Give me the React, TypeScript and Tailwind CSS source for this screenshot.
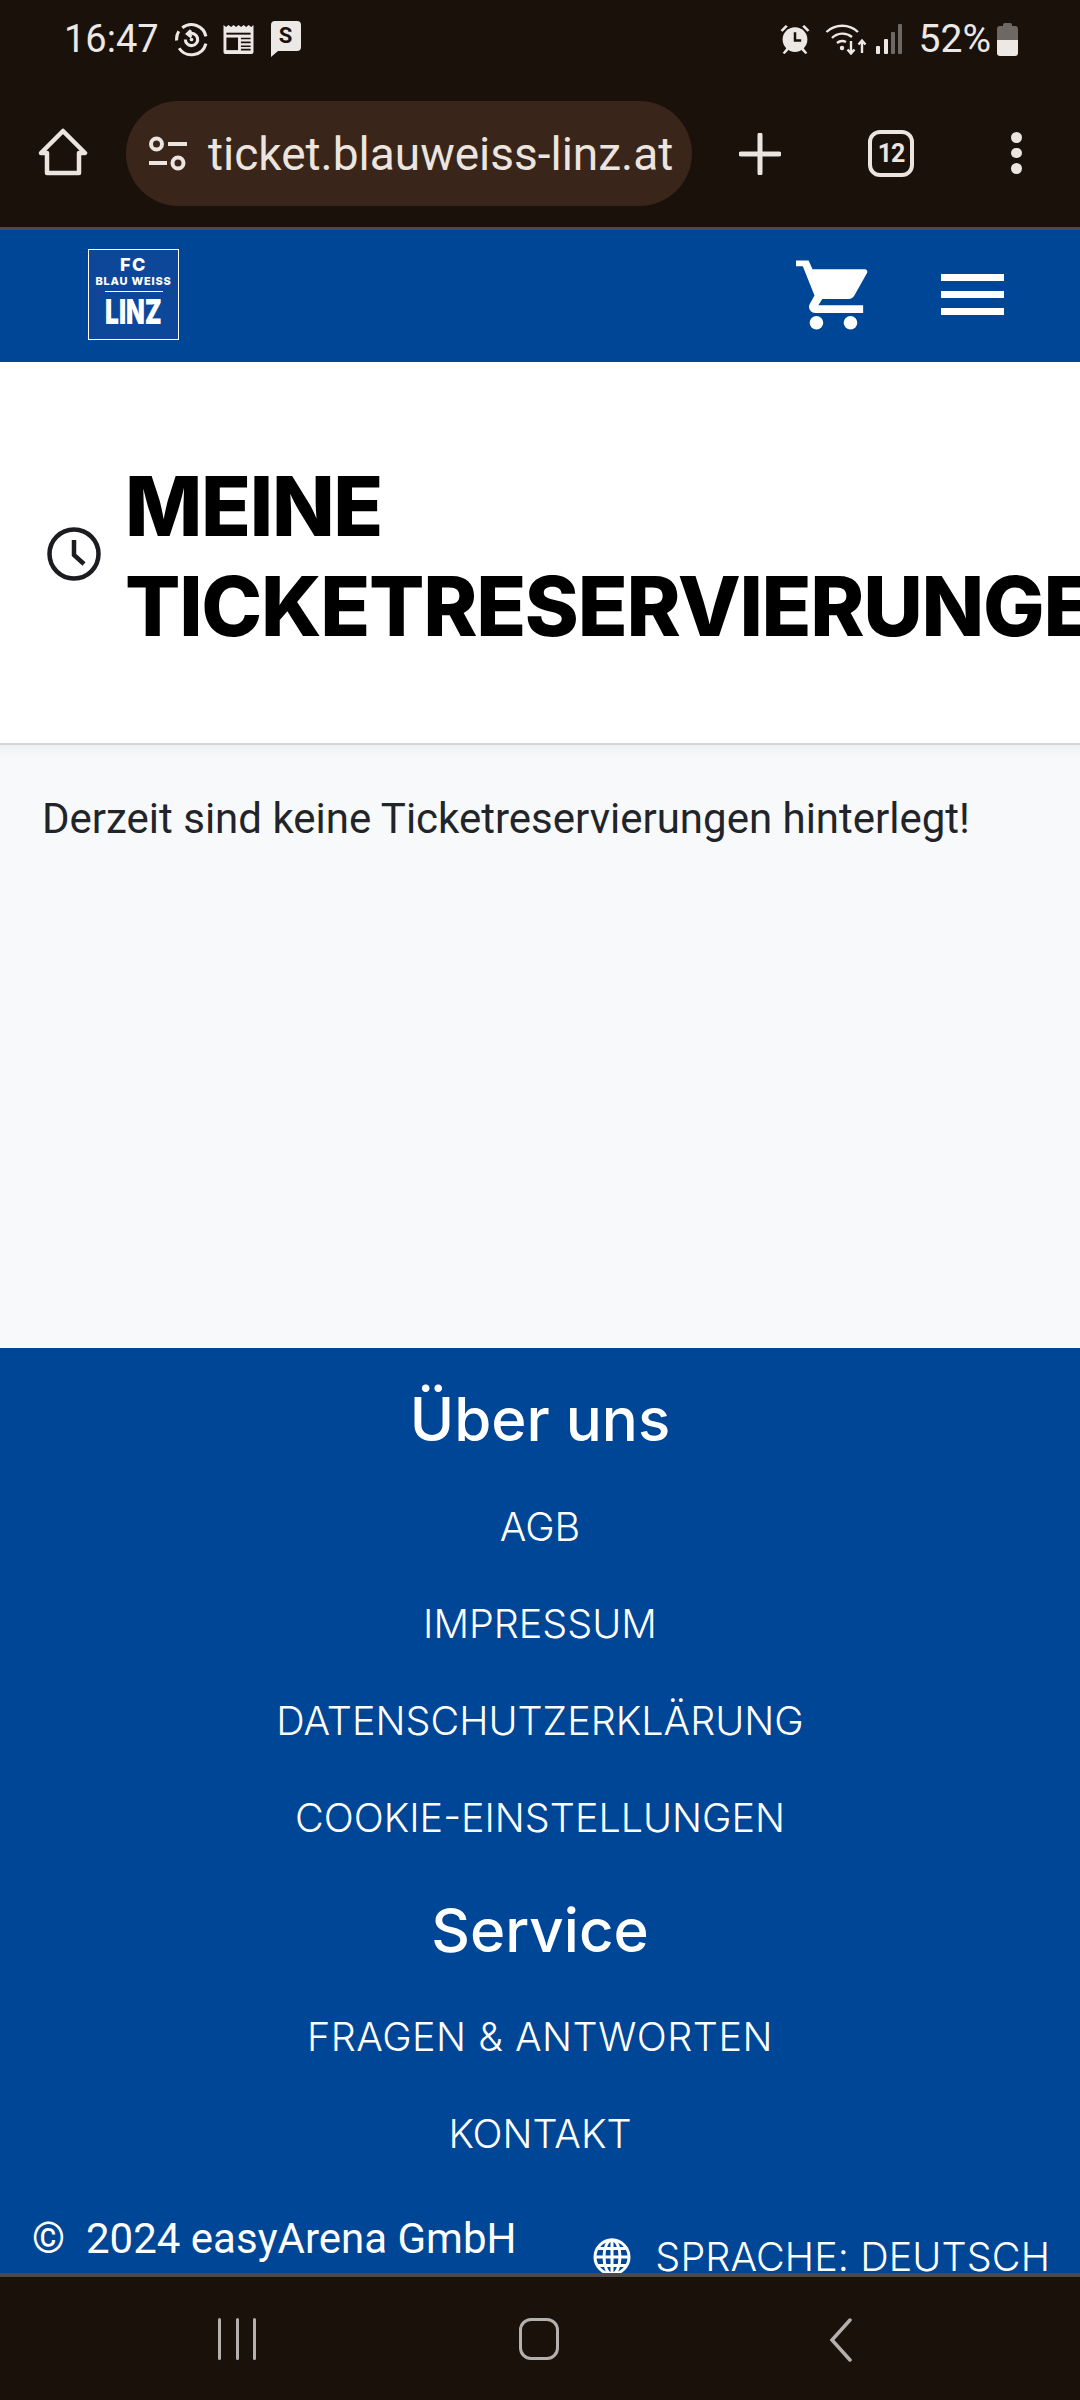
import React from "react";

const sans = "font-['Roboto',sans-serif]";
const display = "font-['Inter',sans-serif]";

function StatusIcons() {
  return (
    <div className="flex items-center">
      <svg width="35" height="35" viewBox="0 0 34 34" fill="none" stroke="#ece8e5" strokeWidth="3" className="ml-[15px]">
        <path d="M8 5.500A14.500 14.500 0 0 1 31 14M31 21A14.500 14.500 0 0 1 5 25.500M2.600 18a14.500 14.500 0 0 1 2-9" />
        <path d="M11 17a6 6 0 1 0 3.500-5.500" />
        <path d="M16.500 8l-3.500 3.500 4 3" />
        <circle cx="17" cy="17" r="1.800" fill="#ece8e5" stroke="none" />
      </svg>
      <svg width="33" height="30" viewBox="0 0 33 31" className="ml-[13px]">
        <path d="M1 1l2.600 2 2.600-2 2.600 2 2.600-2 2.600 2 2.600-2 2.600 2 2.600-2 2.600 2 2.600-2 2.600 2 2.400-2v28a2 2 0 0 1-2 2H3a2 2 0 0 1-2-2z" fill="#ece8e5" />
        <rect x="4" y="9" width="25" height="2" fill="#1a110b" />
        <rect x="4" y="14" width="12" height="13" fill="#1a110b" />
        <path d="M19 15h10M19 19h10M19 23h10M19 26.500h10" stroke="#1a110b" strokeWidth="1.600" />
      </svg>
      <div className="relative ml-[16px] h-[36px] w-[30px]">
        <svg width="30" height="36" viewBox="0 0 30 36" className="absolute inset-0">
          <path d="M4 0h22a4 4 0 0 1 4 4v22a4 4 0 0 1-4 4H7l-7 6V4a4 4 0 0 1 4-4z" fill="#ece8e5" />
        </svg>
        <span className={`absolute inset-x-0 top-[2px] text-center text-[22px] leading-[26px] font-bold text-[#1a110b] ${sans}`}>S</span>
      </div>
    </div>
  );
}

function SystemIcons() {
  return (
    <div className="flex items-center">
      <svg width="32" height="32" viewBox="0 0 30 31" fill="#ece8e5">
        <circle cx="15" cy="16" r="12" />
        <path d="M1 7l5-5 2 1.500-5 5zM29 7l-5-5-2 1.500 5 5zM3 29l4-5 2 2-4 4zM27 29l-4-5-2 2 4 4z" />
        <path d="M15 9v8h6" fill="none" stroke="#1a110b" strokeWidth="2.400" />
      </svg>
      <svg width="42" height="32" viewBox="0 0 42 32" fill="none" stroke="#ece8e5" strokeWidth="2.400" className="ml-[14px]">
        <path d="M1.500 9A23 23 0 0 1 33 9M7 15a15 15 0 0 1 20-1M12 20a8 8 0 0 1 9-1" />
        <circle cx="17" cy="25" r="2.200" fill="#ece8e5" stroke="none" />
        <path d="M26 18v12M22.500 26.500l3.500 4 3.500-4M37 30V18M33.500 21.500l3.500-4 3.500 4" />
      </svg>
      <svg width="28" height="30" viewBox="0 0 26 30" className="ml-[8px]">
        <rect x="0" y="22" width="4" height="8" rx="1" fill="#ece8e5" />
        <rect x="8" y="15" width="4" height="15" rx="1" fill="#ece8e5" />
        <rect x="15" y="8" width="4" height="22" rx="1" fill="#6e6865" />
        <rect x="22" y="0" width="4" height="30" rx="1" fill="#6e6865" />
      </svg>
      <span className={`ml-[16px] text-[39px] leading-[40px] text-[#ece8e5] ${sans}`}>52%</span>
      <div className="ml-[6px] flex h-[33px] w-[21px] flex-col items-center">
        <div className="h-[3px] w-[9px] rounded-t-[2px] bg-[#6e6865]" />
        <div className="flex w-full flex-1 flex-col overflow-hidden rounded-[3px]">
          <div className="h-[14px] bg-[#6e6865]" />
          <div className="flex-1 bg-[#ece8e5]" />
        </div>
      </div>
    </div>
  );
}

function BrowserBar() {
  return (
    <div className="flex h-[128px] items-start pl-[38px] pt-[2px]">
      <svg width="50" height="50" viewBox="0 0 50 50" fill="none" stroke="#ece4df" strokeWidth="4.500" strokeLinejoin="round" strokeLinecap="round" className="mt-[27px]">
        <path d="M3 25L25 3l22 22h-6v20H9V25z" />
      </svg>
      <div className="ml-[38px] flex h-[105px] w-[566px] items-center rounded-[53px] bg-[#39251a] pl-[22px]">
        <svg width="40" height="36" viewBox="0 0 40 36" fill="none" stroke="#ece4df" strokeWidth="4">
          <circle cx="8.500" cy="8" r="5.500" />
          <circle cx="30" cy="27" r="5.500" />
          <path d="M20 8h19M1 27h18" />
        </svg>
        <span className={`ml-[20px] text-[46px] leading-[60px] text-[#ece4df] whitespace-nowrap ${sans}`}>ticket.blauweiss-linz.at</span>
      </div>
      <svg width="42" height="42" viewBox="0 0 42 42" stroke="#ece4df" strokeWidth="5" strokeLinecap="round" className="ml-[47px] mt-[32px]">
        <path d="M21 2v38M2 21h38" />
      </svg>
      <div className="ml-[87px] mt-[29px] flex h-[47px] w-[46px] items-center justify-center rounded-[12px] border-[4.500px] border-[#ece4df]">
        <span className={`text-[25px] leading-none font-bold tracking-[-1px] text-[#ece4df] ${sans}`}>12</span>
      </div>
      <div className="ml-[97px] mt-[31px] flex flex-col gap-[5px]">
        <div className="size-[10.500px] rounded-full bg-[#ece4df]" />
        <div className="size-[10.500px] rounded-full bg-[#ece4df]" />
        <div className="size-[10.500px] rounded-full bg-[#ece4df]" />
      </div>
    </div>
  );
}

function ClubLogo() {
  return (
    <div className={`flex h-[91px] w-[91px] flex-col items-center border border-white bg-[#0d4799] text-white ${display}`}>
      <span className="mt-[7px] text-[18px] leading-[16px] font-extrabold tracking-[1.500px]">FC</span>
      <span className="mt-[1px] text-[11px] leading-[14px] font-extrabold tracking-[0.800px] whitespace-nowrap">BLAU WEISS</span>
      <div className="mt-[3px] h-px w-[58px] bg-white" />
      <span className="mt-[2px] scale-x-[0.72] text-[34px] leading-[36px] font-black">LINZ</span>
    </div>
  );
}

function FooterLink({ children }: { children: React.ReactNode }) {
  return <a className="block h-[97px] text-center text-[39.500px] leading-[97px] font-[350] text-white">{children}</a>;
}

export default function App() {
  return (
    <div className={`flex h-[2400px] w-[1080px] flex-col overflow-hidden bg-[#1a110b] ${sans}`}>
      <div className="h-[227px] shrink-0 bg-[#1a110b]">
        <div className="flex h-[99px] items-start justify-between pl-[64px] pr-[62px] pt-[19px]">
          <div className="flex items-center">
            <span className="text-[38px] leading-[40px] text-[#ece8e5]">16:47</span>
            <StatusIcons />
          </div>
          <SystemIcons />
        </div>
        <BrowserBar />
      </div>

      <div className="flex h-[135px] shrink-0 items-center justify-between border-t-[3px] border-[#4a4a4d] bg-[#004696] pb-[4px] pl-[88px] pr-[76px]">
        <ClubLogo />
        <div className="flex items-center">
          <svg width="72" height="71" viewBox="0 0 74 72" fill="#ffffff">
            <path d="M0 1h13l4 9h53c3 0 4 2 3 4L60 37c-1.500 2.500-3 3.500-6 3.500H27l-4 6.500h46v8H20c-5 0-8-5-6-9l5-9L7 7H0z" />
            <circle cx="21" cy="65" r="7" />
            <circle cx="56" cy="65" r="7" />
          </svg>
          <div className="ml-[73px] flex flex-col gap-[10px]">
            <div className="h-[7px] w-[63px] bg-white" />
            <div className="h-[7px] w-[63px] bg-white" />
            <div className="h-[7px] w-[63px] bg-white" />
          </div>
        </div>
      </div>

      <div className="relative flex h-[383px] shrink-0 items-center overflow-hidden border-b-2 border-[#d4d5d7] bg-white pl-[46px]">
        <svg width="56" height="56" viewBox="0 0 56 56" fill="none" stroke="#1c1c20" strokeWidth="4.500" className="mt-[2px] shrink-0">
          <circle cx="28" cy="28" r="24.500" />
          <path d="M28 14v15l10 9" />
        </svg>
        <h1 className={`ml-[23px] mt-[8px] text-[82px] leading-[100px] font-[850] tracking-[-1.300px] text-black whitespace-nowrap ${display}`}>
          MEINE
          <br />
          TICKETRESERVIERUNGEN
        </h1>
      </div>

      <div className="h-[603px] shrink-0 bg-[#f8f9fb] bg-linear-to-b from-[#eff0f2] to-[#f8f9fb] to-[14px] px-[42px] pt-[46px]">
        <p className="text-[42px] leading-[56px] text-[#212529]">Derzeit sind keine Ticketreservierungen hinterlegt!</p>
      </div>

      <footer className={`h-[925px] shrink-0 overflow-hidden bg-[#004696] ${display}`}>
        <h2 className="mt-[28px] text-center text-[60px] leading-[87px] font-medium text-white">Über uns</h2>
        <div className="mt-[16px]">
          <FooterLink>AGB</FooterLink>
          <FooterLink>IMPRESSUM</FooterLink>
          <FooterLink>DATENSCHUTZERKLÄRUNG</FooterLink>
          <FooterLink>COOKIE-EINSTELLUNGEN</FooterLink>
        </div>
        <h2 className="mt-[20px] text-center text-[60px] leading-[87px] font-medium text-white">Service</h2>
        <div className="mt-[15px]">
          <FooterLink>
            <span className="tracking-[0.500px]">FRAGEN &amp; ANTWORTEN</span>
          </FooterLink>
          <FooterLink>KONTAKT</FooterLink>
        </div>
        <div className="flex items-start justify-between pl-[32px] pr-[30px]">
          <div className={`mt-[28px] flex items-center gap-[21px] text-[42px] leading-[56px] text-white ${sans}`}>
            <span>©</span>
            <span>2024 easyArena GmbH</span>
          </div>
          <div className="mt-[54px] flex items-center gap-[24px] text-[39.500px] leading-[40px] font-[350] text-white">
            <svg width="38" height="38" viewBox="0 0 38 38" fill="none" stroke="#ffffff" strokeWidth="3">
              <circle cx="19" cy="19" r="17" />
              <ellipse cx="19" cy="19" rx="8" ry="17" />
              <path d="M19 2v34M2 19h34M4.500 10.500h29M4.500 27.500h29" />
            </svg>
            <span className="tracking-[0.100px]">SPRACHE: DEUTSCH</span>
          </div>
        </div>
      </footer>

      <nav className="flex flex-1 items-start border-t-[4px] border-[#4a4a4d] bg-[#1a110b] pt-[41px]">
        <div className="ml-[218px] flex h-[42px] w-[38px] justify-between">
          <div className="w-[3px] rounded-full bg-[#b5b0ad]" />
          <div className="w-[3px] rounded-full bg-[#b5b0ad]" />
          <div className="w-[3px] rounded-full bg-[#b5b0ad]" />
        </div>
        <div className="ml-[263px] h-[42px] w-[40px] rounded-[12px] border-[3.500px] border-[#b5b0ad]" />
        <svg width="24" height="44" viewBox="0 0 24 44" fill="none" stroke="#b5b0ad" strokeWidth="3.500" strokeLinecap="round" className="ml-[270px]">
          <path d="M21 2L3 22l18 20" />
        </svg>
      </nav>
    </div>
  );
}
